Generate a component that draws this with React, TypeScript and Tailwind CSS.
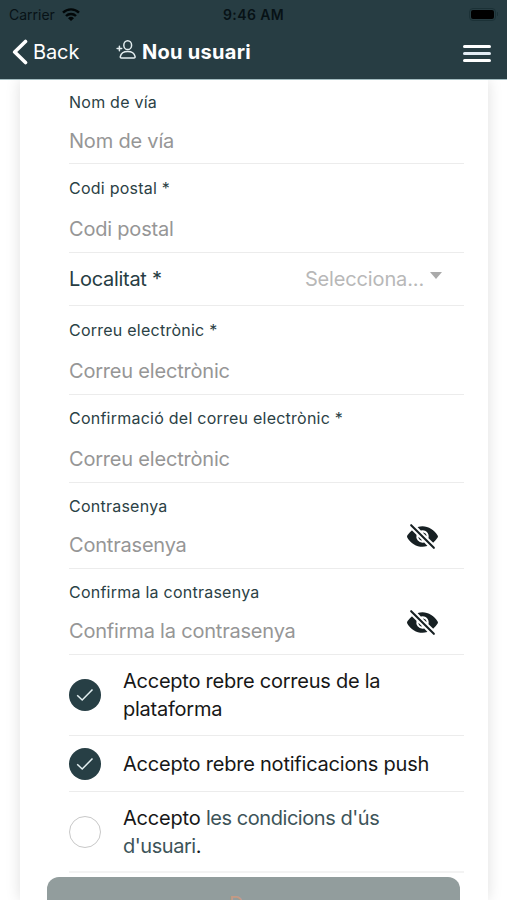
import React from "react";
import { IoEyeOff } from "react-icons/io5";

type FieldProps = {
  label: string;
  placeholder: string;
  rowClass: string;
  gapClass: string;
  secret?: boolean;
};

function Field({ label, placeholder, rowClass, gapClass, secret }: FieldProps) {
  return (
    <div className={`flex shrink-0 justify-between border-b border-[#ececec] ${rowClass}`}>
      <div className={`flex flex-col ${gapClass}`}>
        <label className="text-[16px] leading-5 tracking-[0.24px] whitespace-nowrap text-[#2b4145]">{label}</label>
        <div className="text-[20px] leading-6 tracking-[-0.2px] whitespace-nowrap text-[#969696]">{placeholder}</div>
      </div>
      {secret && <IoEyeOff className="mt-[24px] mr-[25px] size-[33px] text-[#172023]" />}
    </div>
  );
}

function Check({ checked }: { checked?: boolean }) {
  return (
    <div
      className={`flex size-8 shrink-0 items-center justify-center rounded-full ${
        checked ? "bg-[#273f45]" : "border border-[#c8c8c8]"
      }`}
    >
      {checked && (
        <svg width="18" height="14" viewBox="0 0 18 14" fill="none" stroke="#e4f0f2" strokeWidth="1.5">
          <path d="M1.2 7.2 6.2 12 16.5 1.5" />
        </svg>
      )}
    </div>
  );
}

export default function App() {
  return (
    <div className="flex h-[900px] w-[507px] flex-col overflow-hidden bg-white font-['Inter',sans-serif]">
      <header className="relative z-10 flex h-20 shrink-0 flex-col border-b border-[#a3bcc0] bg-[#273d43]">
        <div className="grid h-7 grid-cols-3 items-center px-[9px] text-[14px] text-[#071216]">
          <div className="flex items-center gap-[7px]">
            <span className="w-[46px] whitespace-nowrap">Carrier</span>
            <svg width="18" height="13" viewBox="0 0 18 13" fill="none" stroke="#020708" strokeWidth="2.4">
              <path d="M1 4.7a11.4 11.4 0 0 1 16 0M4 8a7.1 7.1 0 0 1 10 0" />
              <path d="M9 13 6 10.2a4.4 4.4 0 0 1 6 0Z" fill="#020708" stroke="none" />
            </svg>
          </div>
          <span className="text-center font-semibold tracking-[0.4px] whitespace-nowrap">9:46 AM</span>
          <div className="flex items-center justify-end gap-px">
            <div className="h-[13px] w-[27px] rounded-[4px] border border-[#1b3136] p-px">
              <div className="h-full rounded-[2px] bg-black" />
            </div>
            <div className="h-1 w-px rounded-r bg-[#1b3136]" />
          </div>
        </div>
        <div className="flex h-12 items-center pr-4 pl-3 text-white">
          <svg width="16" height="26" viewBox="0 0 16 26" fill="none" stroke="currentColor" strokeWidth="3.6" strokeLinecap="round" strokeLinejoin="round">
            <path d="M13.5 2.5 2.7 13l10.8 10.5" />
          </svg>
          <span className="ml-[5px] w-[46px] text-[20px] tracking-[-0.1px] whitespace-nowrap">Back</span>
          <svg className="mt-[-5px] ml-[37px]" width="21" height="20" viewBox="0 0 21 20" fill="none" stroke="#e3edef" strokeWidth="1.5" strokeLinecap="round" strokeLinejoin="round">
            <ellipse cx="11.7" cy="5.2" rx="3.9" ry="4.4" />
            <path d="M11.7 11.6c-3.4 0-6.7 1.7-7.4 5-.1.8.2 1.5 1.1 1.5H18c.9 0 1.2-.7 1.1-1.5-.7-3.3-4-5-7.4-5Z" />
            <path d="M3.4 6.2v4.6M1.1 8.5h4.6" />
          </svg>
          <span className="ml-[5px] text-[20px] font-bold tracking-[0.28px] whitespace-nowrap">Nou usuari</span>
          <div className="mt-[2px] ml-auto flex w-7 flex-col gap-1">
            <div className="h-[3px] rounded-full bg-white" />
            <div className="h-[3px] rounded-full bg-[#e4edf5]" />
            <div className="h-[3px] rounded-full bg-white" />
          </div>
        </div>
      </header>

      <main className="mr-[19px] ml-5 flex min-h-0 flex-1 flex-col bg-white shadow-[0_0_14px_rgba(0,0,0,0.13)]">
        <div className="mr-6 ml-[49px] flex shrink-0 flex-col">
          <Field label="Nom de vía" placeholder="Nom de vía" rowClass="h-[84px] pt-[12px]" gapClass="gap-[17px]" />
          <Field label="Codi postal *" placeholder="Codi postal" rowClass="h-[89px] pt-[14px]" gapClass="gap-[19px]" />
          <div className="flex h-[53px] shrink-0 items-center justify-between border-b border-[#ececec] pr-[22px] text-[20px]">
            <span className="tracking-[-0.3px] whitespace-nowrap text-[#273d43]">Localitat *</span>
            <div className="flex items-center gap-[6px] text-[#b8b8b8]">
              <span className="tracking-[-0.15px] whitespace-nowrap">Selecciona...</span>
              <div className="mb-[8px] border-x-[6px] border-t-[7px] border-x-transparent border-t-[#aaaaaa]" />
            </div>
          </div>
          <Field label="Correu electrònic *" placeholder="Correu electrònic" rowClass="h-[89px] pt-[14px]" gapClass="gap-[19px]" />
          <Field label="Confirmació del correu electrònic *" placeholder="Correu electrònic" rowClass="h-[88px] pt-[13px]" gapClass="gap-[19px]" />
          <Field label="Contrasenya" placeholder="Contrasenya" rowClass="h-[86px] pt-[13px]" gapClass="gap-[17px]" secret />
          <Field label="Confirma la contrasenya" placeholder="Confirma la contrasenya" rowClass="h-[86px] pt-[13px]" gapClass="gap-[17px]" secret />
          <div className="flex h-[81px] items-center gap-[22px] border-b border-[#ececec] text-[20px] leading-7 tracking-[-0.24px] text-[#171717]">
            <Check checked />
            <p className="whitespace-nowrap">Accepto rebre correus de la<br />plataforma</p>
          </div>
          <div className="flex h-[56px] items-center gap-[22px] border-b border-[#ececec] text-[20px] leading-7 tracking-[-0.22px] text-[#171717]">
            <Check checked />
            <p className="whitespace-nowrap">Accepto rebre notificacions push</p>
          </div>
          <div className="flex h-[81px] items-center gap-[22px] border-b-2 border-[#f3f3f3] text-[20px] leading-7 tracking-[-0.2px] text-[#171717]">
            <Check />
            <p className="whitespace-nowrap">Accepto <span className="tracking-[-0.45px] text-[#3d5459]">les condicions d'ús<br />d'usuari</span>.</p>
          </div>
        </div>
        <button className="mt-[4px] mr-[28px] ml-[27px] flex h-[55px] shrink-0 items-start rounded-[12px] bg-[#929d9d] pt-[15px] pl-[182px] text-[20px] leading-[24px] text-[#c49a84]">
          D
        </button>
      </main>
    </div>
  );
}
